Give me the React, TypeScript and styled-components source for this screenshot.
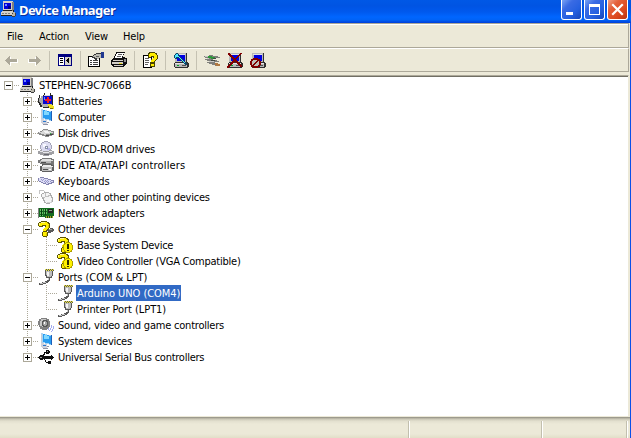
import React from "react";
import styled, { createGlobalStyle, css } from "styled-components";

const GlobalStyle = createGlobalStyle`
  *, *::before, *::after { box-sizing: border-box; }
  body { margin: 0; overflow: hidden; background: #ece9d8; }
`;

const Window = styled.div`
  width: 631px;
  height: 438px;
  display: flex;
  flex-direction: column;
  background: #ece9d8;
  color: #000;
  font: 11px/16px "DejaVu Sans Condensed", "DejaVu Sans", sans-serif;
  font-stretch: condensed;
  cursor: default;
  user-select: none;
`;

const TitleBar = styled.header`
  flex: 0 0 23px;
  display: flex;
  align-items: flex-start;
  gap: 3px;
  padding-right: 4px;
  background: linear-gradient(#0058e6 0, #0054e3 6px, #0059ee 12px, #0066ff 17px, #0062f6 20px, #003dd7 23px);
`;

const TitleIcon = styled.span`
  display: flex;
  padding-top: 1px;
`;

const Title = styled.h1`
  flex: 1;
  margin: 0;
  padding-top: 1px;
  color: #fff;
  font: bold 13px/18px "Noto Sans", sans-serif;
  letter-spacing: -0.58px;
  text-shadow: 1px 1px #0a2f9a;
`;

const CaptionButton = styled.button<{ $close?: boolean }>`
  width: 21px;
  height: 20px;
  padding: 0;
  margin-right: -1px;
  border: 1px solid #fff;
  border-top: 0;
  border-radius: 0 0 3px 3px;
  display: flex;
  background: ${(p) =>
    p.$close
      ? "linear-gradient(135deg, #f0a088 0, #e4603a 30%, #dc4a20 65%, #b83410 100%)"
      : "linear-gradient(135deg, #7ba4f4 0, #3a6be4 30%, #2560e0 65%, #1746b8 100%)"};
`;

const Frame = styled.div`
  flex: 1;
  min-height: 0;
  display: flex;
  flex-direction: column;
  border-right: 1px solid #0a50e8;
`;

const Bar = styled.div<{ $h: number }>`
  flex: 0 0 ${(p) => p.$h}px;
  display: flex;
  align-items: center;
  margin-right: 1px;
  border-top: 1px solid #fff;
  border-right: 1px solid #aca899;
  border-bottom: 1px solid #aca899;
`;

const MenuBar = styled(Bar)`
  border-top: 1px solid #aca899;
  box-shadow: inset 0 1px #fff;
`;

const MenuItem = styled.span<{ $w: number }>`
  width: ${(p) => p.$w}px;
  padding-left: 7px;
  padding-top: 2px;
  letter-spacing: -0.15px;
`;

const Tool = styled.span<{ $ml?: number }>`
  display: flex;
  width: 16px;
  height: 16px;
  margin-left: ${(p) => p.$ml ?? 0}px;
`;

const ToolSeparator = styled.span<{ $ml: number }>`
  width: 1px;
  height: 19px;
  margin-left: ${(p) => p.$ml}px;
  background: #c5c2b2;
`;

const TreePane = styled.main`
  flex: 0 0 342px;
  margin-top: 3px;
  margin-right: 1px;
  border-top: 1px solid #aca899;
  border-right: 1px solid #ece9d8;
  border-bottom: 1px solid #ece9d8;
  box-shadow: inset 0 1px #716f64;
  background: #fff;
  padding: 1px 0 0 4px;
`;

const Row = styled.div`
  display: flex;
  height: 16px;
`;

const dotsV = "repeating-linear-gradient(to bottom, #aca899 0 1px, transparent 1px 2px)";
const dotsH = "repeating-linear-gradient(to right, #aca899 0 1px, transparent 1px 2px)";

/* One 19px indentation column, optionally carrying the parent's dotted rail. */
const Indent = styled.span<{ $rail?: boolean }>`
  flex: 0 0 19px;
  height: 16px;
  background: ${(p) => (p.$rail ? `${dotsV} 4px 0 / 1px 16px no-repeat` : "none")};
`;

type Joint = "root" | "tee" | "end";
const jointHeight: Record<Joint, number> = { root: 0, tee: 16, end: 8 };

/* The column in front of an icon: dotted elbow, starting at the rail. */
const JointCell = styled.span<{ $joint: Joint }>`
  flex: 0 0 15px;
  height: 16px;
  padding-top: 4px;
  background-repeat: no-repeat;
  background-image: ${dotsV}, ${dotsH};
  background-size: 1px ${(p) => jointHeight[p.$joint]}px, 11px 1px;
  background-position: 4px 0, 4px 8px;
`;

const ExpandBox = styled.span<{ $open?: boolean }>`
  display: block;
  width: 9px;
  height: 9px;
  border: 1px solid #aca899;
  background:
    linear-gradient(#000, #000) center / 5px 1px no-repeat,
    linear-gradient(#000, #000) center / ${(p) => (p.$open ? "0 0" : "1px 5px")} no-repeat,
    #fff;
`;

const NodeIcon = styled.span`
  flex: 0 0 16px;
  height: 16px;
  display: flex;
`;

const Label = styled.span<{ $selected?: boolean; $track: number }>`
  margin-left: 3px;
  padding: 0 1px;
  white-space: pre;
  line-height: 17px;
  height: 16px;
  letter-spacing: ${(p) => p.$track}px;
  ${(p) =>
    p.$selected &&
    css`
      background: #316ac5;
      color: #fff;
    `}
`;

const StatusBar = styled.footer`
  flex: 1;
  display: flex;
  padding: 4px 2px 0 0;
  background: linear-gradient(#8e8c80 0, #c9c6b5 2px, #e2dfce 4px, #ece9d8 7px, #ece9d8 17px, #e2dfc8 21px);
`;

const StatusCell = styled.span<{ $w?: number }>`
  ${(p) => (p.$w ? `flex: 0 0 ${p.$w}px;` : "flex: 1;")}
  border-right: 1px solid #fff;
  box-shadow: inset -1px 0 #c2bfae;
`;

const Pic = ({ children }: { children: React.ReactNode }) => (
  <svg width="16" height="16" viewBox="0 0 16 16" shapeRendering="crispEdges">
    {children}
  </svg>
);

const PcIcon = () => (
  <Pic>
    <path d="M3 0h10v10H3z" fill="#d4d0c8" />
    <path d="M4 1h9v9H4zM13 1h1v9h-1z" fill="#808080" />
    <path d="M3 1h9v8H3z" fill="#d4d0c8" />
    <path d="M4 2h7v6H4z" fill="#0000d8" />
    <path d="M5 3h2v2H5z" fill="#7088ff" />
    <path d="M8 5h3v3H8z" fill="#000080" />
    <path d="M2 10h11v1h1v3H1v-3h1z" fill="#d4d0c8" />
    <path d="M1 14h12v1H1zM13 9h1v3h-1zM3 9h9v1H3z" fill="#202020" />
    <path d="M2 12h2v1H2zM5 12h2v1H5zM8 12h2v1H8z" fill="#808080" />
    <path d="M12 11h3v1h1v3h-4z" fill="#b8b5aa" />
    <path d="M12 15h3v1h-3zM15 12h1v3h-1zM12 12h1v1h-1z" fill="#404040" />
  </Pic>
);

const BatteryIcon = () => (
  <Pic>
    <path d="M1 2h1v3h1v6h1v3H2v-2H1v-2H0V5h1zM6 0h1v2h5V0h1v2h2v10H5V2h1z" fill="#282828" />
    <path d="M1 5h3v5H2V9H1zM3 3h2v9H3z" fill="#a8a8a8" />
    <path d="M5 11h9v1H5zM4 12h7v2H4z" fill="#b0b0b0" />
    <path d="M5 14h6v1H5z" fill="#282828" />
    <path d="M5 3h9v8H5z" fill="#0808d0" />
    <path d="M6 4h1v3H6z" fill="#6090ff" />
    <path d="M9 4h2v2h2v2h-2v2H9V8H7V6h2z" fill="#f01828" />
    <path d="M6 2h6v1H6z" fill="#d8d8d8" />
    <path d="M10 11h3v1h2v1h1v3h-3v-1h-2v-1h-1z" fill="#f0e020" />
    <path d="M12 15h3v1h-3zM10 13h1v1h-1z" fill="#807000" />
  </Pic>
);

const BlueScreenIcon = () => (
  <Pic>
    <path d="M3 0h2v1h4v1h5v10h-3v-1H7v-1H3z" fill="#a8d4f4" />
    <path d="M5 1l8 2v8L5 9z" fill="#289cf0" />
    <path d="M6 2l5 1v3L6 6z" fill="#80d8ff" />
    <path d="M13 2h1v10h-1z" fill="#2060b8" />
    <path d="M3 1h1v10H3z" fill="#c8ccd4" />
    <path d="M3 10l6 1v2h2v1H9v1H4v-1H3z" fill="#d0d2dc" />
    <path d="M5 15h5v1H5zM9 13h2v1H9z" fill="#9094a8" />
    <path d="M5 12h3v1H5z" fill="#2878d0" />
  </Pic>
);

const DiskIcon = () => (
  <Pic>
    <path d="M5 4h5v1h3v1h3v4h-2v1h-3v1H7v-1H4v-1H1V9H0V7h2V6h2V5h1z" fill="#8c8c8c" />
    <path d="M5 5h5v1h3v1h2v1h-3v1H8v1H6V9H3V8H1V7h3V6h1z" fill="#d8d8d8" />
    <path d="M6 6h4v1h1v1H7V7H6z" fill="#f4f4f4" />
    <path d="M8 10h3v1H8zM12 9h3v1h-3z" fill="#484848" />
    <path d="M12 8h1v1h-1z" fill="#30c040" />
  </Pic>
);

const DiscIcon = () => (
  <Pic>
    <circle cx="8" cy="6" r="6" fill="#a4a4b8" />
    <circle cx="8" cy="6" r="5" fill="#dcdcf0" />
    <path d="M5 3h3v3H5z" fill="#f8f8ff" />
    <path d="M9 7h3v2H9z" fill="#b8b8e8" />
    <path d="M7 5h3v3H7z" fill="#8890a8" />
    <path d="M8 6h1v1H8z" fill="#fff" />
    <path d="M2 9h2v1h7V9h3v1h2v3h-2v1h-3v1H5v-1H2v-1H0v-3h2z" fill="#a0a0a4" />
    <path d="M2 10h3v1h6v-1h3v1h-3v1H5v-1H2z" fill="#e8e8ec" />
    <path d="M6 13h5v1H6z" fill="#686870" />
  </Pic>
);

const IdeIcon = () => (
  <Pic>
    <path d="M4 1h10v1h2v6h-2V7H2V6H0V3h2V2h2z" fill="#787878" />
    <path d="M4 2h9v1h2v1H3V3h1z" fill="#e0e0e0" />
    <path d="M2 4h11v2H2z" fill="#b8b8b8" />
    <path d="M4 7h10v1h2v6h-2v1H4v-1H2V9h2z" fill="#606060" />
    <path d="M5 8h8v1h2v1H4V9h1z" fill="#ececec" />
    <path d="M4 10h10v4H4z" fill="#c0c0c0" />
    <path d="M5 12h5v1H5zM3 5h5v1H3z" fill="#505050" />
    <path d="M11 12h2v1h-2z" fill="#fff" />
  </Pic>
);

const KeyboardIcon = () => (
  <Pic>
    <path d="M0 5h2V4h4v1h4v1h3v1h3v3h-2v1h-3v1H8v-1H5v-1H3V9H1V8H0z" fill="#8484b0" />
    <path d="M1 5h5v1h4v1h3v1h2v1h-2v1h-3v1H8v-1H5V9H3V8H1z" fill="#dcdcf4" />
    <path d="M3 6h1v1H3zM5 6h1v1H5zM7 7h1v1H7zM9 7h1v1H9zM4 7h1v1H4zM6 8h1v1H6zM8 8h1v1H8zM10 8h1v1h-1zM7 9h1v1H7zM9 9h1v1H9zM12 8h1v1h-1z" fill="#9898cc" />
  </Pic>
);

const MouseIcon = () => (
  <Pic>
    <path d="M1 1h5v1h1v2H6V2H2v3H1z" fill="#c4c4c4" />
    <path d="M6 3h5v1h2v2h1v2h1v5h-1v1h-2v1H8v-1H6v-2H5v-2H4V8H3V5h1V4h2z" fill="#acacac" />
    <path d="M6 4h5v1h1v2h1v2h1v4h-1v1H8v-1H7v-2H6v-2H5V8H4V5h2z" fill="#f4f4f4" />
    <path d="M5 8h2V7h3V6h2v1h-1v1H7v1H5zM7 4h1v3H7z" fill="#c0c0c0" />
    <path d="M9 13h4v-2h1v3H9z" fill="#d4d4d4" />
  </Pic>
);

const NetworkIcon = () => (
  <Pic>
    <path d="M0 3h1v10H0z" fill="#808080" />
    <path d="M1 3h15v8h-1v2H7v-1H1z" fill="#146c20" />
    <path d="M2 4h3v2H2zM6 4h3v2H6zM2 7h3v2H2zM6 7h3v2H6zM2 10h3v1H2z" fill="#68c068" />
    <path d="M3 4h1v7H3zM7 4h1v6H7z" fill="#083c10" />
    <path d="M10 4h5v4h-5z" fill="#202820" />
    <path d="M11 5h3v1h-3z" fill="#90a090" />
    <path d="M8 11h7v2H8z" fill="#a0a828" />
    <path d="M9 11h1v2H9zM11 11h1v2h-1zM13 11h1v2h-1z" fill="#184818" />
  </Pic>
);

/* Thick yellow question mark shared by the unknown-device icons. */
const QuestionShape = () => (
  <>
    <path d="M3 0h6v1h2v1h1v5h-1v1h-1v1H9v2h1v4H9v1H5v-1H4v-4h1V8h1V7h1V5H5v1H1V5H0V2h1V1h2z" fill="#5c5400" />
    <path d="M3 1h6v1h1v1h1v4h-1v1H9v1H8v1H5V8h1V7h1V6h1V4H4v1H1V2h2zM5 11h4v4H5z" fill="#ffee00" />
    <path d="M3 1h4v1H3zM1 2h1v2H1z" fill="#fff890" />
    <path d="M10 4h1v3h-1zM8 12h1v3H8z" fill="#d8c400" />
  </>
);

const UnknownIcon = () => (
  <Pic>
    <path d="M9 8h3V7h3v1h1v2h-1v1h-2v1h-3z" fill="#585858" />
    <path d="M11 8h3v1h-3z" fill="#a0a0a0" />
    <QuestionShape />
  </Pic>
);

const UnknownWarnIcon = () => (
  <Pic>
    <QuestionShape />
    <path d="M9 5h4v1h2v2h1v5h-1v2h-2v1H9v-1H7v-2H6V8h1V6h2z" fill="#b0a000" />
    <path d="M9 6h4v1h1v1h1v5h-1v1h-1v1H9v-1H8v-1H7V8h1V7h1z" fill="#fff200" />
    <path d="M10 7h2v5h-2zM10 13h2v1h-2z" fill="#302c00" />
  </Pic>
);

const PortIcon = () => (
  <Pic>
    <path d="M7 0h9v2h-1v5h-1v2h-2v3h-1v1h-1v1H8v1H5v1H1v-2h3v-1h3v-1h2v-1h1V9H8V7H7z" fill="#585858" />
    <path d="M8 2h6v5h-1v1H9V6H8z" fill="#bcbcbc" />
    <path d="M9 3h2v4H9z" fill="#f4f4f4" />
    <path d="M7 0h1v1H7zM9 0h1v1H9zM11 0h1v1h-1zM13 0h1v1h-1zM15 0h1v1h-1zM8 1h1v1H8zM10 1h1v1h-1zM12 1h1v1h-1zM14 1h1v1h-1z" fill="#f0e840" />
    <path d="M10 9h1v2h-1zM5 13h3v1H5zM2 14h3v1H2z" fill="#c8c8c8" />
  </Pic>
);

const SoundIcon = () => (
  <Pic>
    <path d="M3 1h6v1h2v2h1v6h-1v2H9v1H4v-1H2v-2H1V8H0V4h1V2h2z" fill="#808080" />
    <path d="M3 2h5v1h1v2h1v4H9v1H4V9H2V4h1z" fill="#c8c8c8" />
    <path d="M5 3h4v1h1v5H9v1H5V9H4V4h1z" fill="#585858" />
    <path d="M6 4h2v1h1v3H8v1H6V8H5V5h1z" fill="#a8a8a8" />
    <path d="M6 5h1v2H6z" fill="#fff" />
    <path d="M13 8h1v3h-1v2h-1v1h-1v-1h1v-2h1zM15 9h1v3h-1v2h-1v1h-1v-1h1v-2h1zM10 11h1v2h-1z" fill="#a4acf0" />
  </Pic>
);

const UsbIcon = () => (
  <Pic>
    <path d="M0 8h1V7h1V6h3v1h8V6h1v1h1v1h1v1h-1v1h-1v1h-1v-1H5v1H2v-1H1V9H0z" fill="#101010" />
    <path d="M3 7h1V6h1V5h1V3h2V1h3v1h1v2h-1v1H8V4H7v2H6v1zM6 9h1v2h1v2h2v-1h3v3h-3v-1H8v-1H7v-2H6z" fill="#101010" />
    <path d="M9 2h1v1H9zM2 8h2v1H2z" fill="#a0a0a0" />
  </Pic>
);

const ArrowIcon = ({ flip }: { flip?: boolean }) => (
  <Pic>
    <g transform={flip ? "translate(16 0) scale(-1 1)" : undefined}>
      <path d="M7 5h1v2h7v4H8v3H7v-1H6v-1H5v-1H4v-1H3V9h1V7h1V6h1V5h1z" fill="#fff" />
      <path d="M6 4h1v3h7v3H7v3H6v-1H5v-1H4v-1H3V9H2V8h1V7h1V6h1V5h1z" fill="#aca899" />
    </g>
  </Pic>
);

const PaneIcon = () => (
  <Pic>
    <path d="M1 2h14v12H1z" fill="#000080" />
    <path d="M2 5h5v8H2z" fill="#fff" />
    <path d="M8 5h6v8H8z" fill="#d4d0c8" />
    <path d="M3 6h3v1H3zM3 8h3v1H3zM3 10h3v1H3zM11 6h1v5h-1zM10 7h1v3h-1zM9 8h1v1H9z" fill="#000" />
  </Pic>
);

const PropertiesIcon = () => (
  <Pic>
    <path d="M0 4h12v11H0z" fill="#000" />
    <path d="M1 5h10v9H1z" fill="#fff" />
    <path d="M2 8h2v1H2zM5 8h5v1H5zM2 10h2v1H2zM5 10h5v1H5zM2 12h2v1H2zM5 12h5v1H5z" fill="#404040" />
    <path d="M4 4h1V3h1V2h2V1h5v5h-2v1H9v1H7V7H6V6H4z" fill="#383838" />
    <path d="M5 4h1V3h2V2h5v4h-2v1H9V6H7V5H5z" fill="#bcbcb4" />
    <path d="M8 4h3v1H8z" fill="#606060" />
    <path d="M13 0h3v6h-3z" fill="#203890" />
  </Pic>
);

const PrinterIcon = () => (
  <Pic>
    <path d="M5 0h9v1h-1v2h-1v2h2v1h2v6h-1v1h-1v1h-1v1H2v-1H1v-1H0V8h1V7h1V6h1V4h1V2h1z" fill="#101010" />
    <path d="M6 1h7v1h-1v2h-1v2H4V4h1V2h1z" fill="#fff" />
    <path d="M7 2h4v1H7zM6 4h4v1H6z" fill="#606060" />
    <path d="M2 8h10v1H2zM1 10h11v2H1zM3 13h9v1H3z" fill="#d4d0c8" />
    <path d="M13 7h2v3h-2z" fill="#909090" />
    <path d="M8 11h3v1H8z" fill="#e8d820" />
  </Pic>
);

const HelpIcon = () => (
  <Pic>
    <path d="M1 3h9v13H1z" fill="#000" />
    <path d="M2 4h7v11H2z" fill="#fff" />
    <path d="M3 6h4v1H3zM3 8h4v1H3zM3 10h4v1H3zM3 12h3v1H3z" fill="#606060" />
    <path d="M7 0h6v1h2v2h1v4h-1v1h-1v1h-1v6H8v-5h1V7h2V5H9v1H6V1h1z" fill="#4c4600" />
    <path d="M8 1h5v1h1v1h1v4h-1v1h-1v1h-1v1H9V8h1V7h1V6h1V4H9v1H7V2h1zM9 12h3v2H9z" fill="#ffee00" />
  </Pic>
);

const PcBase = () => (
  <>
    <path d="M2 1h12v9h1v1h1v4h-1v1H2v-1H1v-4h1z" fill="#303030" />
    <path d="M2 1h11v9H2zM2 11h12v4H2z" fill="#b8b8b8" />
    <path d="M4 3h8v6H4z" fill="#0000e0" />
    <path d="M3 2h9v1H3zM2 11h12v1H2z" fill="#e4e4e4" />
    <path d="M9 13h4v1H9z" fill="#505050" />
    <path d="M4 13h2v1H4z" fill="#00a020" />
  </>
);

const ScanIcon = () => (
  <Pic>
    <PcBase />
    <path d="M1 3h1V2h1V1h2v1h1v2h1v1h1v1h1v1h1v1h1v1h1v1h1v1h1v2h-2v-1h-1v-1h-1v-1H9V9H8V8H7V7H6V6H4v1H2V6H1z" fill="#104868" />
    <path d="M2 3h1V2h2v2h1v1h1v1h1v1h1v1h1v1h1v1h1v1h-1v-1h-1V9H9V8H8V7H7V6H6V5H3v1H2z" fill="#50e8ff" />
  </Pic>
);

const UpdateIcon = () => (
  <Pic>
    <path d="M0 4h5V3h4v1h5v1h2v1h-4v1H9v1h4v1h2v1h-4v1h3v1h2v2h-5v-1H8v-1H5v-1H3v-1h2V9H3V8H1V7h2V6H1V5H0z" fill="#80807c" />
    <path d="M1 4h4v1h4v1H5v1H3V6h2V5H1zM5 9h5v1H5z" fill="#c8c8c4" />
    <path d="M4 4h4v1h3v2H7V6H4z" fill="#2c9838" />
    <path d="M9 6h3v1H9zM7 8h4v1H7z" fill="#404840" />
    <path d="M11 11h3v1h2v2h-4v-1h-1z" fill="#b07840" />
  </Pic>
);

const UninstallIcon = () => (
  <Pic>
    <PcBase />
    <path d="M1 1h2v1h1v1h1v1h1v1h1v1h2V5h1V4h1V3h1V2h1V1h2v1h-1v1h-1v1h-1v1h-1v1h-1v1H9v1h1v1h1v1h1v1h1v1h1v1h1v2h-2v-1h-1v-1h-1v-1h-1v-1H9v-1H7v1H6v1H5v1H4v1H3v1H2v1H0v-2h1v-1h1v-1h1v-1h1v-1h1V9h1V7H5V6H4V5H3V4H2V3H1z" fill="#800000" />
  </Pic>
);

const DisableIcon = () => (
  <Pic>
    <PcBase />
    <path d="M3 6h5v1h2v2h1v4h-1v2H8v1H3v-1H1v-2H0V9h1V7h2z" fill="#800000" />
    <path d="M3 8h4v1H6v1H5v1H4v1H3v1H2V9h1zM8 9h1v4H8v1H4v-1h1v-1h1v-1h1v-1h1z" fill="#c0c0b8" />
  </Pic>
);

interface Device {
  name: string;
  icon: React.ComponentType;
  level: 0 | 1 | 2;
  open?: boolean;
  last?: boolean;
  selected?: boolean;
  track?: number;
}

const devices: Device[] = [
  { name: "STEPHEN-9C7066B", icon: PcIcon, level: 0, open: true, track: -0.14 },
  { name: "Batteries", icon: BatteryIcon, level: 1, track: -0.05 },
  { name: "Computer", icon: BlueScreenIcon, level: 1, track: -0.22 },
  { name: "Disk drives", icon: DiskIcon, level: 1, track: -0.27 },
  { name: "DVD/CD-ROM drives", icon: DiscIcon, level: 1, track: -0.16 },
  { name: "IDE ATA/ATAPI controllers", icon: IdeIcon, level: 1, track: 0.16 },
  { name: "Keyboards", icon: KeyboardIcon, level: 1 },
  { name: "Mice and other pointing devices", icon: MouseIcon, level: 1, track: -0.22 },
  { name: "Network adapters", icon: NetworkIcon, level: 1, track: -0.12 },
  { name: "Other devices", icon: UnknownIcon, level: 1, open: true, track: -0.14 },
  { name: "Base System Device", icon: UnknownWarnIcon, level: 2, track: -0.28 },
  { name: "Video Controller (VGA Compatible)", icon: UnknownWarnIcon, level: 2, last: true, track: -0.24 },
  { name: "Ports (COM & LPT)", icon: PortIcon, level: 1, open: true, track: -0.06 },
  { name: "Arduino UNO (COM4)", icon: PortIcon, level: 2, selected: true, track: -0.05 },
  { name: "Printer Port (LPT1)", icon: PortIcon, level: 2, last: true, track: -0.06 },
  { name: "Sound, video and game controllers", icon: SoundIcon, level: 1, track: -0.21 },
  { name: "System devices", icon: BlueScreenIcon, level: 1, track: -0.28 },
  { name: "Universal Serial Bus controllers", icon: UsbIcon, level: 1, last: true, track: -0.25 },
];

const DeviceRow = ({ name, icon: Icon, level, open, last, selected, track = 0 }: Device) => (
  <Row>
    {level > 0 && <Indent />}
    {level === 2 && <Indent $rail />}
    <JointCell $joint={level === 0 ? "root" : last ? "end" : "tee"}>
      {level < 2 && <ExpandBox $open={open} />}
    </JointCell>
    <NodeIcon>
      <Icon />
    </NodeIcon>
    <Label $selected={selected} $track={track}>
      {name}
    </Label>
  </Row>
);

export default function App() {
  return (
    <>
      <GlobalStyle />
      <Window>
        <TitleBar>
          <TitleIcon><PcIcon /></TitleIcon>
          <Title>Device Manager</Title>
          <CaptionButton aria-label="Minimize">
            <svg width="19" height="19" shapeRendering="crispEdges"><path d="M4 12h7v3H4z" fill="#fff" /></svg>
          </CaptionButton>
          <CaptionButton aria-label="Maximize">
            <svg width="19" height="19" shapeRendering="crispEdges"><path fillRule="evenodd" d="M4 4h11v11H4zM5 7h9v7H5z" fill="#fff" /></svg>
          </CaptionButton>
          <CaptionButton $close aria-label="Close">
            <svg width="19" height="19"><path d="M5 5l9 9M14 5l-9 9" stroke="#fff" strokeWidth="2.2" strokeLinecap="square" /></svg>
          </CaptionButton>
        </TitleBar>
        <Frame>
          <MenuBar $h={25}>
            <MenuItem $w={32}>File</MenuItem>
            <MenuItem $w={46}>Action</MenuItem>
            <MenuItem $w={38}>View</MenuItem>
            <MenuItem $w={38}>Help</MenuItem>
          </MenuBar>
          <Bar $h={24}>
            <Tool $ml={3}><ArrowIcon /></Tool>
            <Tool $ml={8}><ArrowIcon flip /></Tool>
            <ToolSeparator $ml={6} />
            <Tool $ml={7}><PaneIcon /></Tool>
            <ToolSeparator $ml={7} />
            <Tool $ml={7}><PropertiesIcon /></Tool>
            <Tool $ml={7}><PrinterIcon /></Tool>
            <ToolSeparator $ml={7} />
            <Tool $ml={7}><HelpIcon /></Tool>
            <ToolSeparator $ml={7} />
            <Tool $ml={7}><ScanIcon /></Tool>
            <ToolSeparator $ml={7} />
            <Tool $ml={7}><UpdateIcon /></Tool>
            <Tool $ml={7}><UninstallIcon /></Tool>
            <Tool $ml={7}><DisableIcon /></Tool>
          </Bar>
          <TreePane>
            {devices.map((d) => (
              <DeviceRow key={d.name} {...d} />
            ))}
          </TreePane>
          <StatusBar>
            <StatusCell $w={410} />
            <StatusCell $w={133} />
            <StatusCell />
          </StatusBar>
        </Frame>
      </Window>
    </>
  );
}
